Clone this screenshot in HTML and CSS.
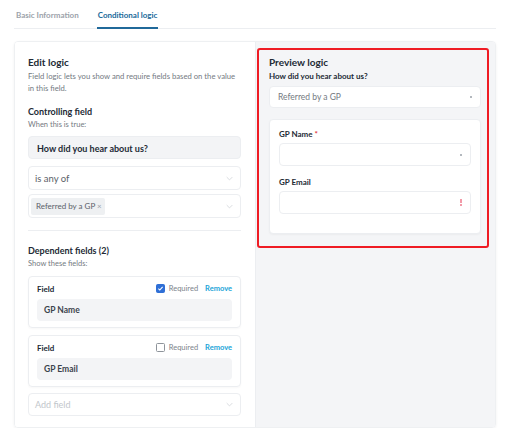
FILE: index.html
```html
<!DOCTYPE html>
<html lang="en">
<head>
  <meta charset="UTF-8" />
  <meta name="viewport" content="width=device-width, initial-scale=1.0"/>
  <title>Conditional logic</title>
  <link rel="stylesheet" href="styles.css">
</head>
<body>
  <div class="page">
    <div class="tabs">
      <span class="tab">Basic Information</span>
      <span class="tab active">Conditional logic</span>
    </div>

    <div class="card">
      <!-- Editor column -->
      <div class="edit">
        <h2>Edit logic</h2>
        <p class="desc">Field logic lets you show and require fields based on the value in this field.</p>

        <h3>Controlling field</h3>
        <p class="hint">When this is true:</p>
        <div class="question">How did you hear about us?</div>

        <div class="select">
          <span>is any of</span>
          <svg class="chev" viewBox="0 0 10 6"><path d="M1 1l4 4 4-4"/></svg>
        </div>
        <div class="select multi">
          <span class="tag">Referred by a GP <span class="x">&times;</span></span>
          <svg class="chev" viewBox="0 0 10 6"><path d="M1 1l4 4 4-4"/></svg>
        </div>

        <hr>

        <h3>Dependent fields (2)</h3>
        <p class="hint">Show these fields:</p>

        <div class="field">
          <div class="field-head">
            <b>Field</b>
            <label class="req"><span class="box checked"><svg viewBox="0 0 10 10"><path d="M2 5.2l2 2 4-4.4"/></svg></span>Required</label>
            <a class="remove">Remove</a>
          </div>
          <div class="field-input">GP Name</div>
        </div>

        <div class="field">
          <div class="field-head">
            <b>Field</b>
            <label class="req"><span class="box"></span>Required</label>
            <a class="remove">Remove</a>
          </div>
          <div class="field-input">GP Email</div>
        </div>

        <div class="select add">
          <span>Add field</span>
          <svg class="chev" viewBox="0 0 10 6"><path d="M1 1l4 4 4-4"/></svg>
        </div>
      </div>

      <!-- Live preview column -->
      <div class="preview-col">
        <div class="preview">
          <h2>Preview logic</h2>
          <div class="plabel">How did you hear about us?</div>
          <div class="pselect">
            <span>Referred by a GP</span>
            <span class="dot"></span>
          </div>

          <div class="pcard">
            <div class="plabel">GP Name <span class="star">*</span></div>
            <div class="pselect"><span></span><span class="dot"></span></div>
            <div class="plabel second">GP Email</div>
            <div class="pselect"><span></span><span class="warn"><i></i><i></i></span></div>
          </div>
        </div>
      </div>
    </div>
  </div>
</body>
</html>
```

FILE: styles.css
```css
body {
  margin: 0;
  background: #fff;
  font-family: Lato, "Open Sans", sans-serif;
  color: #222a35;
}

.page {
  width: 482px;
  margin-left: 14px;
}

/* tabs */
.tabs {
  display: flex;
  height: 28px;
  border-bottom: 1px solid #eceef1;
  padding-left: 2px;
  gap: 18px;
}

.tab {
  font-size: 8px;
  font-weight: 700;
  color: #9ca2aa;
  line-height: 30px;
  height: 27px;
}

.tab.active {
  color: #20699a;
  border-bottom: 2px solid #20699a;
  padding: 0 1px;
}

/* main card */
.card {
  margin-top: 12px;
  height: 387px;
  box-sizing: border-box;
  display: grid;
  grid-template-columns: 240px 240px;
  border: 1px solid #eef0f2;
  border-radius: 4px;
  box-shadow: 0 1px 3px rgba(0, 0, 0, 0.06);
  overflow: hidden;
}

.edit {
  padding: 14px 14px 0 13px;
  background: #fff;
}

h2 {
  font-size: 10px;
  line-height: 13px;
  margin: 0;
  font-weight: 700;
}

h3 {
  font-size: 9px;
  line-height: 13px;
  margin: 11px 0 0;
  font-weight: 700;
}

.desc {
  margin: 1px 0 0;
  font-size: 7.7px;
  line-height: 12px;
  color: #747a82;
}

.hint {
  margin: 1px 0 0;
  font-size: 7.5px;
  line-height: 11px;
  color: #747a82;
}

.question {
  margin-top: 6px;
  height: 23px;
  line-height: 23px;
  background: #f3f4f6;
  border: 1px solid #eceef1;
  border-radius: 4px;
  padding-left: 8px;
  font-size: 9px;
  font-weight: 700;
  box-sizing: border-box;
}

.select {
  height: 24px;
  margin-top: 7px;
  border: 1px solid #eceef1;
  border-radius: 4px;
  display: flex;
  align-items: center;
  justify-content: space-between;
  padding: 0 7px 0 6px;
  font-size: 9.5px;
  color: #5b6169;
  box-sizing: border-box;
}

.select.multi {
  margin-top: 4px;
  padding-left: 2px;
}

.tag {
  background: #eef0f2;
  border-radius: 2px;
  font-size: 8px;
  padding: 0 3px 0 5px;
  line-height: 17px;
  color: #5b6169;
}

.tag .x {
  color: #9aa0a8;
  font-size: 8px;
}

.chev {
  width: 7px;
  height: 5px;
  fill: none;
  stroke: #c9cdd2;
  stroke-width: 1;
}

hr {
  margin: 12px 0 0;
  border: 0;
  border-top: 1px solid #eceef1;
}

hr + h3 {
  margin-top: 13px;
}

.field {
  margin-top: 7px;
  border: 1px solid #eceef1;
  border-radius: 4px;
  padding: 5px 8px 6px 8px;
  box-shadow: 0 1px 2px rgba(0, 0, 0, 0.03);
}

.field + .field {
  margin-top: 7px;
}

.field-head {
  display: flex;
  align-items: center;
  height: 13px;
  font-size: 8px;
}

.field-head b {
  flex: 1;
  font-weight: 700;
}

.req {
  display: flex;
  align-items: center;
  gap: 4px;
  color: #7d838b;
  font-size: 7.5px;
}

.box {
  width: 7px;
  height: 7px;
  border: 1px solid #8e949b;
  border-radius: 1.5px;
  display: inline-flex;
}

.box.checked {
  background: #2f6fd6;
  border-color: #2f6fd6;
}

.box svg {
  width: 7px;
  height: 7px;
  fill: none;
  stroke: #fff;
  stroke-width: 1.6;
}

.remove {
  margin-left: 7px;
  color: #21a4d8;
  font-weight: 700;
  font-size: 7.5px;
}

.field-input {
  margin-top: 4px;
  height: 22px;
  line-height: 22px;
  background: #f3f4f6;
  border-radius: 4px;
  padding-left: 7px;
  font-size: 8.5px;
  font-weight: 700;
  color: #3c434c;
}

.select.add {
  margin-top: 6px;
  height: 23px;
  color: #c2c6cb;
  font-size: 9px;
}

/* preview column */
.preview-col {
  background: #f4f5f7;
  border-left: 1px solid #eceef1;
  padding: 6px 6px 0 1px;
}

.preview {
  border: 2px solid #ef1c24;
  border-radius: 3px;
  padding: 6px 6px 12px 10px;
}

.plabel {
  margin-top: 2px;
  font-size: 8px;
  font-weight: 700;
  line-height: 11px;
}

.star {
  color: #e0303a;
}

.pselect {
  margin-top: 4px;
  height: 22px;
  background: #fff;
  border: 1px solid #eceef1;
  border-radius: 4px;
  display: flex;
  align-items: center;
  justify-content: space-between;
  padding: 0 8px;
  font-size: 8.5px;
  color: #747a82;
  box-sizing: border-box;
}

.dot {
  width: 2px;
  height: 2px;
  border-radius: 1px;
  background: #9aa0a8;
}

/* small pink marker on the email input */
.warn {
  display: flex;
  flex-direction: column;
  gap: 1px;
}

.warn i {
  display: block;
  width: 2px;
  height: 4px;
  background: #f29aa8;
}

.warn i + i {
  height: 2px;
}

.pcard {
  margin-top: 11px;
  background: #fff;
  border: 1px solid #eceef1;
  border-radius: 4px;
  padding: 7px 9px 19px 9px;
  box-shadow: 0 1px 2px rgba(0, 0, 0, 0.04);
}

.pcard .pselect {
  height: 23px;
  margin-top: 3px;
}

.plabel.second {
  margin-top: 11px;
}
```
